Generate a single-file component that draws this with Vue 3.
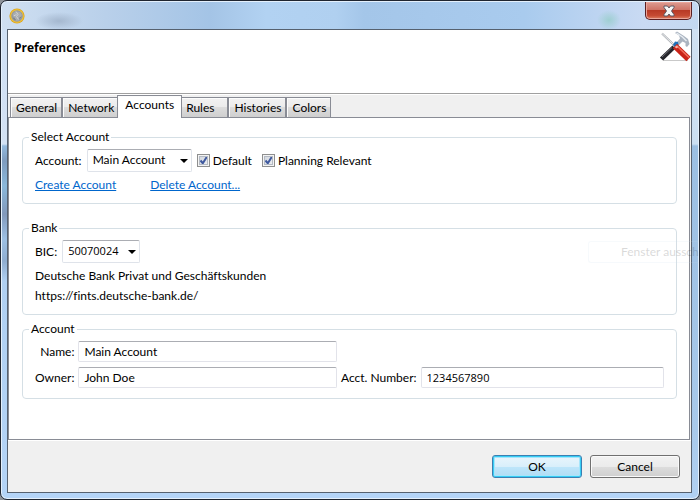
<script setup>
import { ref } from 'vue'

const tabs = [
  { label: 'General' },
  { label: 'Network' },
  { label: 'Accounts' },
  { label: 'Rules', roomy: true },
  { label: 'Histories' },
  { label: 'Colors' },
]
const active = ref('Accounts')
const account = ref('Main Account')
const isDefault = ref(true)
const isPlanning = ref(true)
const bic = ref('50070024')
const name = ref('Main Account')
const owner = ref('John Doe')
const number = ref('1234567890')
</script>

<template>
  <div class="window">
    <div class="titlebar">
      <svg class="coin" viewBox="0 0 16 16" aria-hidden="true">
        <circle cx="8" cy="8" r="7.6" fill="#dba521" />
        <circle cx="8" cy="8" r="6.800" fill="#f2c436" />
        <circle cx="8" cy="8" r="5.800" fill="#94999e" />
        <path d="M3.500 6l3-2.500 4.500.5 2 3-2 2.500-1 3-3 .5-1.500-3.500z" fill="#a9adb0" />
        <path d="M7 3.500l2 3-1.500 2 2 3M4.500 8l3-1.500" stroke="#cfd1d2" stroke-width="1" fill="none" />
        <path d="M4.500 10l2 2M10.500 10.500l1-1.500" stroke="#74797e" stroke-width="1" />
      </svg>
      <button class="close" type="button" aria-label="Close">
        <svg viewBox="0 0 14 12" aria-hidden="true">
          <path d="M2 1h3.500L7 3l1.500-2H12v1.500L9.500 6 12 9.500V11H8.500L7 9l-1.500 2H2V9.500L4.500 6 2 2.500z" fill="#f6f6f6" stroke="#5c5865" stroke-width="1" />
        </svg>
      </button>
    </div>

    <div class="client">
      <header class="header">
        <h1>Preferences</h1>
        <svg class="tools" viewBox="0 0 32 32" aria-hidden="true">
          <path d="M4 29.500h25" stroke="#c9c9c9" stroke-width="1" />
          <path d="M3 2.500L15 14" stroke="#a9adb2" stroke-width="2" />
          <path d="M3 2.500L14 13" stroke="#eceef0" stroke-width="1" />
          <path d="M16 2l2-1.500 7 4.500 4 3 1.500 5-2.500 3-1.500-1 0-3-3-1.500-4 4-2.500-2.500 4-4.500-1-3z" fill="#aab4c0" />
          <path d="M17.500 2l6 4 4 4" stroke="#e6ebf0" stroke-width="1.500" fill="none" />
          <path d="M14 14l2-3.500 3 .5.500 3-3 3z" fill="#1d6fb8" />
          <path d="M2.500 28L15 16" stroke="#25252b" stroke-width="4.500" />
          <path d="M3 26L13 16.500" stroke="#6d6d75" stroke-width="1" />
          <path d="M16 15L29.500 28" stroke="#c92318" stroke-width="6" />
          <path d="M17.500 14.500L30 26.500" stroke="#f0705c" stroke-width="1.500" />
          <circle cx="17.500" cy="16" r="1.300" fill="#f6b1a4" />
        </svg>
      </header>

      <div class="tabs" role="tablist">
        <button
          v-for="t in tabs"
          :key="t.label"
          type="button"
          role="tab"
          class="tab"
          :class="{ active: t.label === active, roomy: t.roomy }"
          :aria-selected="t.label === active"
          @click="active = t.label"
        >{{ t.label }}</button>
      </div>

      <main class="panel">
        <fieldset>
          <legend>Select Account</legend>
          <div class="row">
            <label for="account">Account:</label>
            <span class="combo wide">
              <select id="account" v-model="account"><option>Main Account</option></select>
              <svg viewBox="0 0 8 4" aria-hidden="true"><path d="M0 0h8L4 4z" /></svg>
            </span>
            <label class="check"><input v-model="isDefault" type="checkbox" /><span>Default</span></label>
            <label class="check"><input v-model="isPlanning" type="checkbox" /><span>Planning Relevant</span></label>
          </div>
          <div class="links">
            <a href="#create">Create Account</a>
            <a href="#delete">Delete Account...</a>
          </div>
        </fieldset>

        <fieldset class="bank">
          <legend>Bank</legend>
          <div class="row">
            <label for="bic">BIC:</label>
            <span class="combo">
              <select id="bic" v-model="bic" class="digits"><option>50070024</option></select>
              <svg viewBox="0 0 8 4" aria-hidden="true"><path d="M0 0h8L4 4z" /></svg>
            </span>
          </div>
          <p class="bank-name">Deutsche Bank Privat und Geschäftskunden</p>
          <p class="bank-url">https://fints.deutsche-bank.de/</p>
        </fieldset>

        <fieldset class="details">
          <legend>Account</legend>
          <div class="grid">
            <label for="name">Name:</label>
            <input id="name" v-model="name" type="text" />
            <label class="second" for="owner">Owner:</label>
            <input id="owner" v-model="owner" type="text" />
            <label for="number">Acct. Number:</label>
            <input id="number" v-model="number" class="digits" type="text" />
          </div>
        </fieldset>
      </main>

      <footer class="footer">
        <button type="button" class="btn primary">OK</button>
        <button type="button" class="btn">Cancel</button>
      </footer>
    </div>

    <div class="ghost" aria-hidden="true">Fenster aussch</div>
  </div>
</template>

<style>
body {
  margin: 0;
  background: #8d9299;
}
</style>

<style scoped>
.window {
  position: relative;
  box-sizing: border-box;
  display: flex;
  flex-direction: column;
  min-height: 100vh;
  overflow: hidden;
  padding: 1px 7px 6px 6px;
  border: 1px solid #1f2530;
  border-radius: 7px;
  box-shadow: inset 0 0 0 1px #e4f0fc;
  background:
    linear-gradient(#cfe0f4 0, #d3e1f3 115px, #93b9dd 117px, #7f9cbf 132px, #8ab8db 157px, #8299bb 185px, #9dc0e4 210px, #8fadd0 232px, #b0d0f2 252px, #b4d4f7 100%) 0 28px / 7px 100% no-repeat,
    linear-gradient(#cfe0f2 0, #cbdff2 115px, #9bbfe2 117px, #a8c9ea 400px, #b4d4f7 100%) 100% 28px / 8px 100% no-repeat,
    linear-gradient(#b4d4f7, #b4d4f7) 0 100% / 100% 7px no-repeat,
    radial-gradient(ellipse 12px 10px at 608px 19px, #9fcfd2, transparent),
    radial-gradient(ellipse 24px 9px at 58px 20px, #a5b8cf, transparent),
    linear-gradient(90deg, #cfdff1 0, #b9d0ea 15%, #a4c4e6 30%, #b2d2f2 38%, #b0d0f0 48%, #a4c6e9 52%, #a9cbee 75%, #c9daf3 92%, #c3d8f0 100%);
  font-family: Lato, "Noto Sans", sans-serif;
  font-size: 12px;
  line-height: 16px;
  font-variant-ligatures: none;
  color: #000;
}

button,
input,
select {
  box-sizing: border-box;
  margin: 0;
  font: inherit;
  color: inherit;
}

.titlebar {
  display: flex;
  justify-content: space-between;
  align-items: flex-start;
  height: 27px;
}

.coin {
  width: 16px;
  height: 16px;
  margin: 6px 0 0 2px;
}

.close {
  display: flex;
  align-items: center;
  justify-content: center;
  width: 47px;
  height: 18px;
  padding: 0;
  border: 1px solid #5a1f22;
  border-top: 0;
  border-radius: 0 0 5px 5px;
  box-shadow: inset 0 0 0 1px #eaa69b;
  background: linear-gradient(#dd9c92 0, #cf7467 45%, #b83a26 50%, #c54a33 80%, #dd8064 100%);
}

.close svg {
  width: 14px;
  height: 12px;
}

.client {
  display: flex;
  flex: 1;
  flex-direction: column;
  border: 1px solid #56616f;
  background: #f0f0f0;
}

.header {
  display: flex;
  justify-content: space-between;
  box-sizing: border-box;
  height: 64px;
  padding: 1px 0 0 6px;
  border-bottom: 1px solid #a0a0a0;
  background: #fff;
}

h1 {
  margin: 9px 0 0;
  font-family: "Open Sans", "Noto Sans", sans-serif;
  font-size: 12px;
  line-height: 16px;
  font-weight: 700;
}

.tools {
  width: 32px;
  height: 32px;
}

.tabs {
  display: flex;
  align-items: flex-end;
  height: 22px;
  padding: 0 2px;
  border-top: 1px solid #fff;
}

.tab {
  height: 20px;
  padding: 0 4px 0 5px;
  border: 1px solid #898c95;
  border-bottom: 0;
  box-shadow: inset 1px 1px 0 #fcfcfc;
  background: linear-gradient(#f2f2f2 0, #ebebeb 50%, #dcdcdc 50%, #cfcfcf 100%);
}

.tab.active {
  z-index: 1;
  height: 23px;
  margin: 0 -2px -1px;
  padding: 0 7px 4px;
  background: #fff;
}

.tab.roomy {
  padding-right: 13px;
}

.panel {
  flex: 1;
  margin-right: 1px;
  padding: 11px 12px 12px 13px;
  border: 1px solid #898c95;
  background: #fff;
}

fieldset {
  min-width: 0;
  margin: 0;
  padding: 4px 12px 10px;
  border: 1px solid #d5dfe5;
  border-radius: 4px;
}

legend {
  margin-left: -6px;
  padding: 0 2px;
}

.bank {
  margin-top: 16px;
}

.details {
  margin-top: 6px;
}

.row {
  display: flex;
  align-items: center;
  gap: 5px;
}

.combo {
  position: relative;
  display: inline-flex;
  width: 78px;
}

.combo.wide {
  width: 105px;
}

.combo select {
  width: 100%;
  height: 23px;
  padding: 0 18px 1px 5px;
  appearance: none;
  border: 1px solid #dfe3ea;
  border-top-color: #abadb3;
  border-radius: 2px;
  background: #fff;
}

.combo svg {
  position: absolute;
  top: 10px;
  right: 4px;
  width: 8px;
  height: 4px;
}

.combo .digits,
.grid .digits {
  font-family: "Open Sans", "Noto Sans", sans-serif;
  font-size: 11px;
}

.check {
  display: flex;
  align-items: center;
  gap: 3px;
  margin-right: 5px;
}

.check input {
  width: 13px;
  height: 13px;
  appearance: none;
  border: 1px solid #8e8f8f;
  box-shadow: inset 0 0 0 1px #f4f4f4, inset 0 0 0 2px #b4bac4;
  background: linear-gradient(135deg, #cdd2da, #f2f4f6);
}

.check input:checked {
  background: url("data:image/svg+xml,%3Csvg xmlns='http://www.w3.org/2000/svg' viewBox='0 0 11 11'%3E%3Cpath d='M2.500 5.500L4.800 8.200 8.700 2' fill='none' stroke='%23405a9f' stroke-width='2'/%3E%3C/svg%3E"), linear-gradient(135deg, #cdd2da, #f2f4f6);
}

.links {
  display: flex;
  gap: 34px;
  margin-top: 5px;
}

a {
  color: #0066cc;
  text-decoration: underline;
}

p {
  margin: 5px 0 0;
}

.bank-url {
  margin-top: 4px;
}

.grid {
  display: grid;
  grid-template-columns: auto 257fr auto 242fr;
  gap: 5px 4px;
  align-items: center;
}

.grid label {
  text-align: right;
}

.grid .second {
  grid-column: 1;
}

.grid input {
  width: 100%;
  min-width: 0;
  height: 21px;
  padding: 0 5px;
  border: 1px solid #e2e3ea;
  border-top-color: #abadb3;
  border-radius: 2px;
  background: #fff;
}

.footer {
  display: flex;
  justify-content: flex-end;
  gap: 8px;
  padding: 14px 11px 14px;
  border-top: 1px solid #fff;
}

.btn {
  width: 90px;
  height: 23px;
  padding: 0;
  border: 1px solid #707070;
  border-radius: 3px;
  box-shadow: inset 0 0 0 1px #fafafa;
  background: linear-gradient(#f2f2f2 0, #ebebeb 50%, #dddddd 50%, #cfcfcf 100%);
}

.btn.primary {
  border-color: #3c7fb1;
  box-shadow: inset 0 0 0 1px #35cdf5, inset 0 0 0 2px #a6e5fb;
  background: linear-gradient(#e9f5fc 0, #d9effb 50%, #bee6fb 50%, #b0dcf3 100%);
}

.ghost {
  position: absolute;
  top: 240px;
  left: 587px;
  right: -1px;
  box-sizing: border-box;
  height: 22px;
  padding: 2px 0 0 32px;
  border: 1px solid #c8dcec;
  border-right: 0;
  border-radius: 3px 0 0 3px;
  opacity: 0.15;
  white-space: nowrap;
  pointer-events: none;
}
</style>
